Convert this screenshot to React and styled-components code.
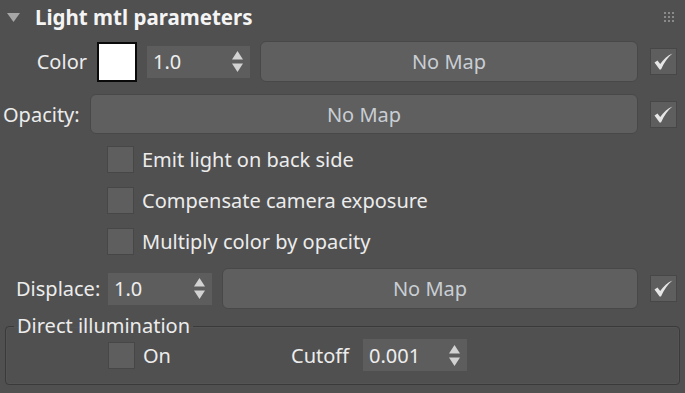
import React from "react";
import styled, { createGlobalStyle } from "styled-components";

const Global = createGlobalStyle`
  html, body { margin: 0; padding: 0; background: #505050; }
  body {
    font-family: "Noto Sans", "Open Sans", sans-serif;
    font-size: 20px;
    color: #e8e8e8;
    width: 685px;
    height: 393px;
    overflow: hidden;
  }
`;

const Panel = styled.div`
  display: flex;
  flex-direction: column;
  width: 685px;
  height: 393px;
  box-sizing: border-box;
`;

const Header = styled.div`
  display: flex;
  align-items: center;
  height: 34px;
  padding-left: 7px;
  padding-right: 11px;
`;

const Title = styled.div`
  margin-left: 15px;
  font-weight: 700;
  font-size: 20.5px;
  color: #f4f4f4;
`;

const Grip = styled.div`
  margin-left: auto;
  display: grid;
  grid-template-columns: repeat(3, 2px);
  grid-auto-rows: 2px;
  gap: 2px;
  span { background: #8a8a8a; }
`;

const Row = styled.div`
  display: flex;
  align-items: center;
  height: ${(p) => p.$h || 41}px;
  margin-top: ${(p) => p.$top || 0}px;
  padding-left: ${(p) => p.$pl || 0}px;
  padding-right: 8px;
`;

const Label = styled.div`
  width: ${(p) => p.$w}px;
  flex: none;
  text-align: ${(p) => p.$align || "left"};
  white-space: nowrap;
  color: #ececec;
`;

const Swatch = styled.div`
  width: 40px;
  height: 40px;
  box-sizing: border-box;
  border: 2px solid #0a0a0a;
  background: #ffffff;
  margin-left: 10px;
  flex: none;
`;

const SpinnerBox = styled.div`
  width: ${(p) => p.$w}px;
  height: 32px;
  box-sizing: border-box;
  margin-left: ${(p) => p.$ml || 0}px;
  background: #5d5d5d;
  display: flex;
  align-items: center;
  padding: 0 7px 0 6px;
  flex: none;
  color: #eeeeee;
`;

const SpinValue = styled.span`
  flex: 1;
`;

const MapButton = styled.div`
  flex: 1;
  height: ${(p) => p.$h || 41}px;
  margin-left: ${(p) => p.$ml || 0}px;
  box-sizing: border-box;
  background: #5f5f5f;
  border: 1px solid #484848;
  border-radius: 6px;
  display: flex;
  align-items: center;
  justify-content: center;
  color: #c9ced4;
`;

const Box = styled.div`
  width: 27px;
  height: 27px;
  box-sizing: border-box;
  background: #5e5e5e;
  border: 1px solid #474747;
  flex: none;
  margin-left: ${(p) => p.$ml || 0}px;
  display: flex;
  align-items: center;
  justify-content: center;
`;

const CheckText = styled.span`
  margin-left: 8px;
  white-space: nowrap;
  color: #ececec;
`;

const Group = styled.fieldset`
  margin: 7px 5px 0 5px;
  padding: 3px 0 13px 0;
  border: 1px solid #3a3a3a;
  border-radius: 4px;
  box-shadow: inset 0 0 0 1px #545454;
  min-width: 0;
`;

const Legend = styled.legend`
  margin-left: 8px;
  padding: 0 3px;
  line-height: 20px;
  color: #ececec;
`;

const GroupRow = styled.div`
  display: flex;
  align-items: center;
  height: 32px;
`;

const OnItem = styled.div`
  display: flex;
  align-items: center;
  width: 183px;
  margin-left: 102px;
  flex: none;
`;

const Arrows = () => (
  <svg width="11" height="21" viewBox="0 0 11 21">
    <path d="M5.5 0 L11 8.5 L0 8.5 Z" fill="#d2d2d2" />
    <path d="M0 12.5 L11 12.5 L5.5 21 Z" fill="#d2d2d2" />
  </svg>
);

const Spinner = ({ value, w, ml }) => (
  <SpinnerBox $w={w} $ml={ml}>
    <SpinValue>{value}</SpinValue>
    <Arrows />
  </SpinnerBox>
);

const Check = ({ checked, ml }) => (
  <Box $ml={ml}>
    {checked && (
      <svg width="19" height="17" viewBox="0 0 19 17">
        <path
          d="M0.5 9.5 L3.5 7.5 L6.2 11 C9.5 6.5 13.5 2.5 18.5 0.5 C13.8 4.2 10.2 9.5 7 16.5 L5.6 16.5 Z"
          fill="#e6e6e6"
        />
      </svg>
    )}
  </Box>
);

export default function App() {
  return (
    <>
      <Global />
      <Panel>
        <Header>
          <svg width="13" height="9" viewBox="0 0 13 9">
            <path d="M0 0 L13 0 L6.5 9 Z" fill="#a6a6a6" />
          </svg>
          <Title>Light mtl parameters</Title>
          <Grip>
            {Array.from({ length: 9 }).map((_, i) => (
              <span key={i} />
            ))}
          </Grip>
        </Header>

        <Row $top={7} $h={41}>
          <Label $w={87} $align="right">Color</Label>
          <Swatch />
          <Spinner value="1.0" w={103} ml={10} />
          <MapButton $ml={10}>No Map</MapButton>
          <Check checked ml={12} />
        </Row>

        <Row $top={12} $h={40} $pl={3}>
          <Label $w={87}>Opacity:</Label>
          <MapButton $h={40}>No Map</MapButton>
          <Check checked ml={12} />
        </Row>

        <Row $top={12} $h={27} $pl={107}>
          <Check />
          <CheckText>Emit light on back side</CheckText>
        </Row>
        <Row $top={14} $h={27} $pl={107}>
          <Check />
          <CheckText>Compensate camera exposure</CheckText>
        </Row>
        <Row $top={14} $h={27} $pl={107}>
          <Check />
          <CheckText>Multiply color by opacity</CheckText>
        </Row>

        <Row $top={13} $h={41} $pl={16}>
          <Label $w={92}>Displace:</Label>
          <Spinner value="1.0" w={104} />
          <MapButton $ml={10}>No Map</MapButton>
          <Check checked ml={12} />
        </Row>

        <Group>
          <Legend>Direct illumination</Legend>
          <GroupRow>
            <OnItem>
              <Check />
              <CheckText>On</CheckText>
            </OnItem>
            <Label $w={72}>Cutoff</Label>
            <Spinner value="0.001" w={104} />
          </GroupRow>
        </Group>
      </Panel>
    </>
  );
}
